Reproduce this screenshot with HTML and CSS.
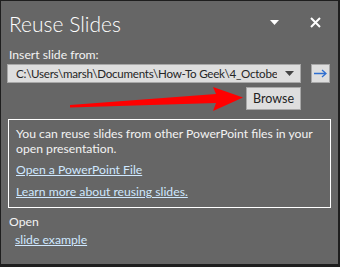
FILE: index.html
```html
<!DOCTYPE html>
<html lang="en">
<head>
  <meta charset="UTF-8">
  <title>Reuse Slides</title>
  <link rel="stylesheet" href="styles.css">
</head>
<body>
  <div class="pane">
    <div class="head">
      <h1>Reuse Slides</h1>
      <div class="tools">
        <svg class="menu" width="9" height="5" viewBox="0 0 9 5"><path d="M0 0H9L4.5 5Z" fill="#fff"/></svg>
        <svg class="close" width="11" height="11" viewBox="0 0 11 11"><path d="M1 1L10 10M10 1L1 10" stroke="#fff" stroke-width="2"/></svg>
      </div>
    </div>

    <div class="label">Insert slide from:</div>
    <div class="source-row">
      <div class="combo">
        <span class="path">C:\Users\marsh\Documents\How-To Geek\4_Octobe</span>
        <svg class="caret" width="9" height="5" viewBox="0 0 9 5"><path d="M0 0H9L4.5 5Z" fill="#444"/></svg>
      </div>
      <button type="button" class="go">
        <svg width="13" height="9" viewBox="0 0 13 9"><path d="M0 4.5H12M8 1L12 4.5L8 8" fill="none" stroke="#2f6fd0" stroke-width="1.3"/></svg>
      </button>
    </div>
    <div class="browse-row">
      <button type="button" class="browse">Browse</button>
    </div>

    <div class="info">
      <p>You can reuse slides from other PowerPoint files in your open presentation.</p>
      <a href="#">Open a PowerPoint File</a>
      <a href="#">Learn more about reusing slides.</a>
    </div>

    <div class="recent">
      <div class="recent-title">Open</div>
      <a href="#">slide example</a>
    </div>

    <!-- red pointer drawn over the panel -->
    <svg class="pointer" width="340" height="267" viewBox="0 0 340 267">
      <path d="M70 105 L216 94 L213 87 L243 97.5 L213 111 L216 103 L70 107.5 Z" fill="#f00"/>
    </svg>
  </div>
</body>
</html>
```

FILE: styles.css
```css
html, body {
  margin: 0;
  padding: 0;
}
body {
  font-family: Lato, 'Open Sans', sans-serif;
  font-size: 12.2px;
  color: #f3f3f3;
}
.pane {
  position: relative;
  width: 340px;
  height: 267px;
  box-sizing: border-box;
  background: #666;
  border-style: solid;
  border-color: #1e1e1e;
  border-width: 1px 2px 3px 1px;
  padding: 0 6px;
}
.head {
  display: flex;
  align-items: center;
  justify-content: space-between;
  height: 44px;
}
h1 {
  margin: 0 0 0 2px;
  font-weight: 300;
  font-size: 21px;
  color: #fff;
}
.tools {
  display: flex;
  align-items: center;
  gap: 31px;
  margin-right: 11px;
  padding-bottom: 2px;
}
.label {
  padding-left: 2px;
  line-height: 19px;
}
.source-row {
  display: flex;
  align-items: center;
  gap: 10px;
}
.combo {
  display: flex;
  align-items: center;
  width: 294px;
  height: 19px;
  box-sizing: border-box;
  background: #dedede;
  border: 1px solid #a8a8a8;
  color: #262626;
  padding: 0 6px 0 8px;
}
.path {
  flex: 1;
  overflow: hidden;
  white-space: nowrap;
  font-size: 11.6px;
  letter-spacing: -0.25px;
}
.caret {
  margin-left: 8px;
}
.go {
  width: 19px;
  height: 19px;
  padding: 0;
  background: #dedede;
  border: 1px solid #a8a8a8;
  display: flex;
  align-items: center;
  justify-content: center;
}
.browse-row {
  display: flex;
  justify-content: flex-end;
  width: 294px;
  margin-top: 4px;
}
.browse {
  width: 55px;
  height: 23px;
  padding: 0;
  font-family: inherit;
  font-size: 12.5px;
  color: #222;
  background: #dedede;
  border: 1px solid #a8a8a8;
}
.info {
  margin: 9px 0 0 1px;
  width: 323px;
  height: 89px;
  box-sizing: border-box;
  border: 1px solid #fff;
  padding: 6px 7px;
}
.info p {
  margin: 0 0 6px;
  line-height: 15px;
}
.info a {
  display: block;
  line-height: 15px;
  margin-bottom: 7px;
}
a {
  color: #cfe8ff;
}
.recent {
  margin-top: 6px;
  padding-left: 2px;
}
.recent-title {
  line-height: 16px;
}
.recent a {
  display: inline-block;
  margin: 2px 0 0 6px;
}
.pointer {
  position: absolute;
  left: -1px;
  top: -1px;
}
```
